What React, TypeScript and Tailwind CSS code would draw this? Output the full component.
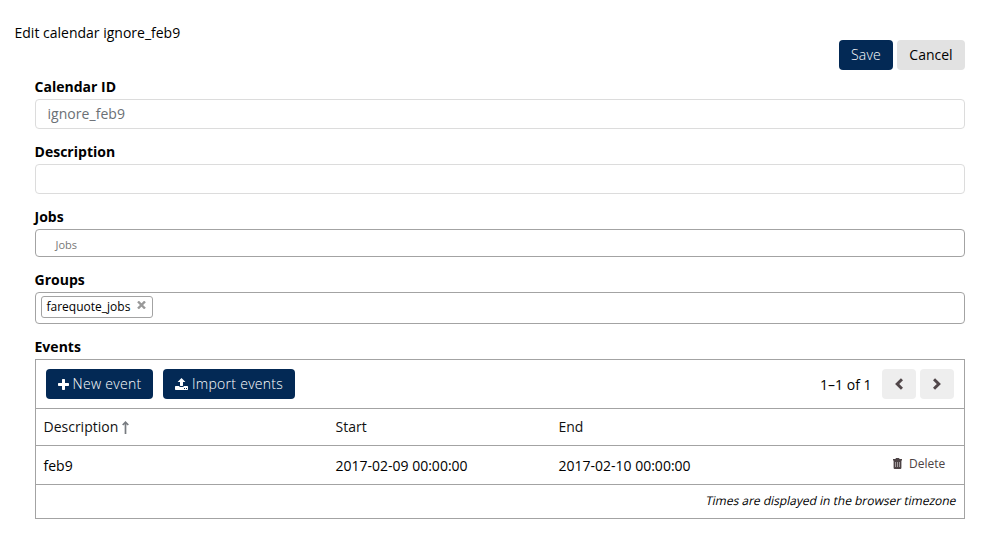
import React from "react";

const fieldLabel = "-ml-[0.5px] block h-5 text-[14px] leading-5 font-bold tracking-[0.02px] text-black";

function Plus() {
  return (
    <svg width="11" height="11" viewBox="0 0 11 11" fill="currentColor">
      <path d="M4.700 0h1.600q.7 0 .7.700V4h3.300q.7 0 .7.700v1.600q0 .7-.7.700H7v3.300q0 .7-.7.700H4.700q-.7 0-.7-.7V7H.7Q0 7 0 6.300V4.700Q0 4 .7 4H4V.7Q4 0 4.700 0z" />
    </svg>
  );
}

function Upload() {
  return (
    <svg width="13" height="12" viewBox="0 0 13 12" fill="currentColor">
      <path d="M6.500 0 10.400 4H8v3.600q0 .4-.4.4H5.400Q5 8 5 7.600V4H2.600z" />
      <path fillRule="evenodd" d="M.7 8H4q.4 1 1.400 1h2.200Q8.600 9 9 8h3.300q.7 0 .7.700v2.600q0 .7-.7.700H.7Q0 12 0 11.300V8.700Q0 8 .7 8zM9 10v1h1v-1zM11 10v1h1v-1z" />
    </svg>
  );
}

function Chevron({ right = false }: { right?: boolean }) {
  return (
    <svg width="8" height="12" viewBox="0 0 8 12" fill="none" stroke="currentColor" strokeWidth="3">
      <path d={right ? "M1 1.200 5.800 6 1 10.800" : "M7 1.200 2.200 6 7 10.800"} />
    </svg>
  );
}

function Trash() {
  return (
    <svg width="9" height="11" viewBox="0 0 9 11" fill="currentColor">
      <path d="M3 0h3l.6 1H9v1.500h-.6v7.300Q8.400 11 7.400 11H1.600Q.6 11 .6 9.800V2.500H0V1h2.400z" />
      <path d="M2.500 4v5M4.500 4v5M6.500 4v5" stroke="#ddd9da" strokeWidth=".6" />
    </svg>
  );
}

function Close() {
  return (
    <svg width="9" height="8" viewBox="0 0 9 8" stroke="currentColor" strokeWidth="2.400">
      <path d="M1 .5 8 7.500M8 .5 1 7.500" />
    </svg>
  );
}

export default function App() {
  return (
    <main className="h-[544px] w-[983px] bg-white pt-[23px] pr-[18px] pl-[35px] font-['Open_Sans','Noto_Sans',sans-serif] text-[14px] leading-5 text-black">
      <h1 className="-ml-[20.5px] h-[17px]">Edit calendar ignore_feb9</h1>
      <div className="flex h-[30px] justify-end gap-1">
        <button className="h-[30px] w-[54px] rounded bg-[#032955] font-light tracking-[0.2px] text-white">Save</button>
        <button className="h-[30px] w-[68px] rounded bg-[#e2e2e2]">Cancel</button>
      </div>

      <label className={`${fieldLabel} mt-[7px]`}>Calendar ID</label>
      <div className="mt-[2px] flex h-[30px] items-center rounded border border-[#dcdcdc] pl-[11.5px] tracking-[0.04px] text-[#6b7075]">ignore_feb9</div>

      <label className={`${fieldLabel} mt-[13px]`}>Description</label>
      <div className="mt-[2px] h-[30px] rounded border border-[#dcdcdc]" />

      <label className={`${fieldLabel} mt-[13px]`}>Jobs</label>
      <div className="mt-[2px] flex h-7 items-center rounded border border-[#a3a3a3] pt-[3px] pl-[19.5px] text-[11px] text-[#777]">Jobs</div>

      <label className={`${fieldLabel} mt-[13px]`}>Groups</label>
      <div className="mt-[2px] flex h-8 items-start rounded border border-[#a3a3a3] pt-[3px] pl-[5px]">
        <div className="flex h-[22px] w-[112px] items-center rounded-[3px] border border-[#a3a3a3] pl-[4.500px] text-[12px] text-black">
          <span>farequote_jobs</span>
          <span className="ml-[6.500px] pb-[5px] text-[#999]"><Close /></span>
        </div>
      </div>

      <label className={`${fieldLabel} mt-[13px]`}>Events</label>
      <section className="mt-[2px] h-[160px] border border-[#a3a3a3]">
        <div className="flex h-[49px] items-center border-b border-[#a3a3a3] px-[10px]">
          <button className="flex h-[30px] w-[107px] items-center rounded bg-[#032955] pl-[12px] font-light tracking-[0.3px] whitespace-nowrap text-white">
            <Plus /><span className="ml-[3.500px]">New event</span>
          </button>
          <button className="ml-[10px] flex h-[30px] w-[132px] items-center rounded bg-[#032955] pl-[12px] font-light tracking-[0.28px] whitespace-nowrap text-white">
            <Upload /><span className="ml-[4px]">Import events</span>
          </button>
          <span className="ml-auto pt-[2px]">1–1 of 1</span>
          <button className="ml-[10.5px] flex h-[30px] w-[34px] items-center justify-center rounded bg-[#eeeeee] text-[#51474a]"><Chevron /></button>
          <button className="ml-1 flex h-[30px] w-[34px] items-center justify-center rounded bg-[#eeeeee] pr-[1px] text-[#51474a]"><Chevron right /></button>
        </div>
        <div className="grid h-[37px] grid-cols-[292px_223px_1fr] items-center border-b border-[#a3a3a3] pl-[7.5px] text-[#111]">
          <div className="flex items-center">
            <span>Description</span>
            <svg className="ml-[3.500px]" width="7" height="13" viewBox="0 0 7 13" fill="none" stroke="#777b80" strokeWidth="1.700">
              <path d="M3.500 13V1M.7 4 3.500 1.200 6.300 4" />
            </svg>
          </div>
          <span>Start</span>
          <span>End</span>
        </div>
        <div className="grid h-[39px] grid-cols-[292px_223px_1fr_71px] items-center border-b border-[#a3a3a3] pt-[2px] pl-[7.5px] text-black">
          <span>feb9</span>
          <span>2017-02-09 00:00:00</span>
          <span>2017-02-10 00:00:00</span>
          <button className="flex items-center pb-[5px] text-[12px] text-[#4d4345]"><Trash /><span className="ml-[7px]">Delete</span></button>
        </div>
        <div className="flex h-[33px] items-center justify-end pr-[8px] pb-[2px] text-[12px]"><span className="-skew-x-12">Times are displayed in the browser timezone</span></div>
      </section>
    </main>
  );
}
